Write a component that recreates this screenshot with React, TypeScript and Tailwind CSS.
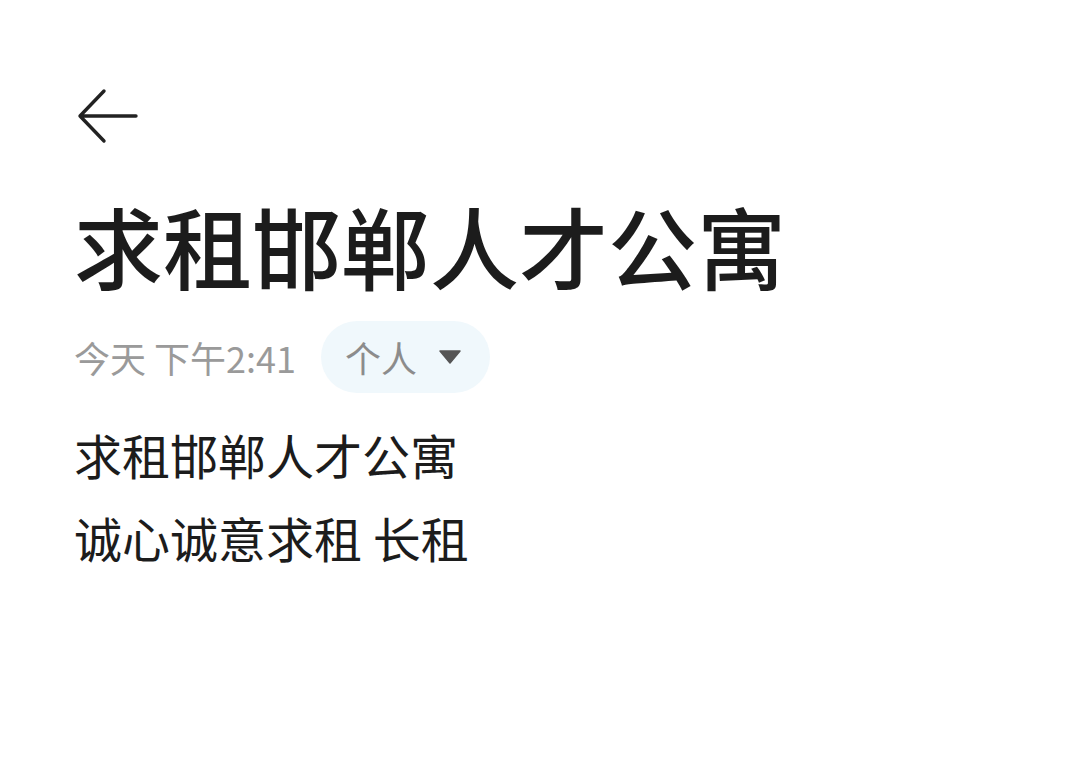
export default function App() {
  return (
    <div
      className="min-h-[771px] w-full bg-white pl-[74px] pt-[86px]"
      style={{ fontFamily: '"Noto Sans CJK SC", "Noto Sans", sans-serif' }}
    >
      <button className="ml-[2px] block h-[60px] w-[64px]">
        <svg width="64" height="60" viewBox="0 0 64 60" fill="none">
          <path
            d="M60 30H4M28 5L4 30L28 55"
            stroke="#222222"
            strokeWidth="3.4"
            strokeLinecap="round"
            strokeLinejoin="round"
          />
        </svg>
      </button>
      <h1 className="mt-[40px] text-[89px] font-medium leading-[118px] text-[#1c1c1c]">求租邯郸人才公寓</h1>
      <div className="mt-[17px] flex items-center">
        <span className="text-[36px] leading-[72px] text-[#9a9a9a]">今天 下午2:41</span>
        <div className="ml-[25px] flex h-[72px] items-center rounded-full bg-[#f0f8fc] pl-[24px] pr-[29px]">
          <span className="text-[36px] text-[#8c8c8c]">个人</span>
          <svg className="ml-[22px]" width="22" height="14" viewBox="0 0 22 14">
            <path d="M1 1H21L11 13Z" fill="#555555" stroke="#555555" strokeWidth="1.5" strokeLinejoin="round" />
          </svg>
        </div>
      </div>
      <div className="mt-[20px] text-[48px] leading-[83px] text-[#1c1c1c]">
        <p>求租邯郸人才公寓</p>
        <p>诚心诚意求租 长租</p>
      </div>
    </div>
  );
}
